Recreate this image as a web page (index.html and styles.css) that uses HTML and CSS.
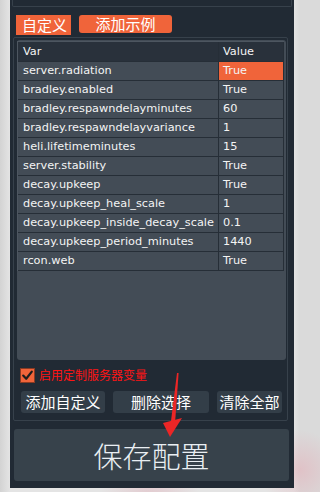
FILE: index.html
```html
<!DOCTYPE html>
<html lang="zh">
<head>
<meta charset="utf-8">
<title>自定义</title>
<link rel="stylesheet" href="styles.css">
</head>
<body>
<div class="panel">
  <div class="topframe"></div>
  <div class="tabs">
    <div class="tab tab-active">自定义</div>
    <div class="tab tab-round">添加示例</div>
  </div>
  <div class="group">
    <div class="view">
      <div class="table">
        <div class="cell head var">Var</div><div class="cell head val">Value</div>
        <div class="cell var">server.radiation</div><div class="cell val selected">True</div>
        <div class="cell var">bradley.enabled</div><div class="cell val">True</div>
        <div class="cell var">bradley.respawndelayminutes</div><div class="cell val">60</div>
        <div class="cell var">bradley.respawndelayvariance</div><div class="cell val">1</div>
        <div class="cell var">heli.lifetimeminutes</div><div class="cell val">15</div>
        <div class="cell var">server.stability</div><div class="cell val">True</div>
        <div class="cell var">decay.upkeep</div><div class="cell val">True</div>
        <div class="cell var">decay.upkeep_heal_scale</div><div class="cell val">1</div>
        <div class="cell var">decay.upkeep_inside_decay_scale</div><div class="cell val">0.1</div>
        <div class="cell var">decay.upkeep_period_minutes</div><div class="cell val">1440</div>
        <div class="cell var">rcon.web</div><div class="cell val">True</div>
      </div>
    </div>
    <div class="check-row">
      <span class="checkbox">
        <svg width="15" height="15" viewBox="0 0 15 15"><path d="M3.2 7.6 L6.2 10.8 L11.8 3.6" fill="none" stroke="#1d1d1d" stroke-width="2.2" stroke-linecap="round" stroke-linejoin="round"/></svg>
      </span>
      <span class="check-label">启用定制服务器变量</span>
    </div>
    <div class="btn-row">
      <div class="btn btn-add">添加自定义</div>
      <div class="btn btn-del">删除选择</div>
      <div class="btn btn-clear">清除全部</div>
    </div>
  </div>
  <div class="save">保存配置</div>
</div>
<svg class="arrow" width="30" height="72" viewBox="0 0 30 72">
  <polygon points="17,3 18.6,3 15.2,51 11,51" fill="#ec2626"/>
  <polygon points="3,53 22,48 10,67" fill="#ec2626"/>
</svg>
</body>
</html>
```
FILE: styles.css
```css
html, body {
  margin: 0;
  padding: 0;
}
body {
  width: 300px;
  height: 492px;
  overflow: hidden;
  background:
    radial-gradient(circle at 300px 470px, rgba(230,170,180,0.5), rgba(230,170,180,0) 40px),
    radial-gradient(circle at 150px 500px, rgba(225,175,185,0.5), rgba(225,175,185,0) 50px),
    linear-gradient(90deg, #d3d3d3 0px, #e4e4e4 10px, #e4e4e4 294px, #dadada 300px);
  font-family: "DejaVu Sans", Verdana, sans-serif;
}
.panel {
  margin-left: 10px;
  width: 284px;
  height: 488px;
  background: #212a34;
  display: flex;
  flex-direction: column;
}
.topframe {
  height: 7px;
  margin: 0 2px;
  box-sizing: border-box;
  border: 1px solid #37414b;
  border-top: 0;
  border-radius: 0 0 2px 2px;
}
.tabs {
  display: flex;
  align-items: flex-start;
  gap: 8px;
  margin-top: 8px;
  padding-left: 6px;
  height: 20px;
}
.tab {
  font-family: "Noto Sans CJK SC", sans-serif;
  font-size: 15px;
  color: #ffffff;
  background: #f0643a;
}
.tab-active {
  width: 55px;
  height: 20px;
  line-height: 20px;
  box-sizing: border-box;
  padding-left: 6px;
}
.tab-round {
  width: 93px;
  height: 18px;
  line-height: 18px;
  border-radius: 3px;
  text-align: center;
}
.group {
  margin: 2px 0 0 3px;
  width: 275px;
  height: 384px;
  box-sizing: border-box;
  border: 1px solid #37414b;
  border-radius: 2px;
  padding: 2px 1px 0 3px;
  display: flex;
  flex-direction: column;
}
.view {
  width: 269px;
  height: 320px;
  box-sizing: border-box;
  background: #434c56;
  border-radius: 3px;
  padding: 2px 2px 0 1px;
}
.table {
  display: grid;
  grid-template-columns: 201px 65px;
  border-top: 1px solid #4d5660;
  border-left: 1px solid #4d5660;
  margin-top: -1px;
  margin-left: -1px;
}
.cell {
  height: 19px;
  box-sizing: border-box;
  border-bottom: 1px solid #262e37;
  line-height: 18px;
  font-size: 11.3px;
  color: #f4f4f4;
  white-space: nowrap;
  overflow: hidden;
}
.cell.var {
  padding-left: 5px;
  border-right: 1px solid #262e37;
}
.cell.val {
  padding-left: 4px;
  border-right: 1px solid #262e37;
}
.cell.head {
  background: #29313b;
  height: 20px;
  line-height: 19px;
}
.cell.selected {
  background: #f0643a;
}
.check-row {
  display: flex;
  align-items: center;
  margin-top: 7px;
  padding-left: 3px;
  height: 16px;
}
.checkbox {
  width: 15px;
  height: 15px;
  box-sizing: border-box;
  background: #f0643a;
  border: 1px solid #8a3a22;
  display: flex;
  align-items: center;
  justify-content: center;
}
.checkbox svg {
  display: block;
  margin: -1px;
}
.check-label {
  margin-left: 4px;
  font-family: "Noto Sans CJK SC", sans-serif;
  font-size: 12px;
  line-height: 16px;
  color: #ff1414;
}
.btn-row {
  display: flex;
  gap: 8px;
  margin-top: 8px;
  padding-left: 4px;
}
.btn {
  height: 22px;
  line-height: 22px;
  border-radius: 3px;
  background: #333e48;
  color: #ffffff;
  font-family: "Noto Sans CJK SC", sans-serif;
  font-size: 15px;
  text-align: center;
  white-space: nowrap;
}
.btn-add { width: 84px; }
.btn-del { width: 96px; }
.btn-clear { width: 65px; }
.save {
  margin: 8px 0 0 4px;
  width: 275px;
  height: 52px;
  line-height: 52px;
  border-radius: 3px;
  background: #37424b;
  color: #e9eef2;
  font-family: "Noto Sans CJK SC", sans-serif;
  font-size: 29px;
  font-weight: 300;
  text-align: center;
}
.arrow {
  position: absolute;
  left: 160px;
  top: 370px;
}
```
